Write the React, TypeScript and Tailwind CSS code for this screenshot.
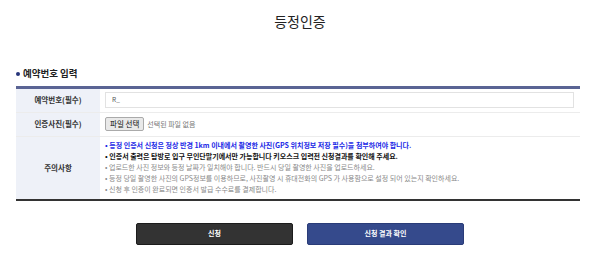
import React from 'react';

const font = { fontFamily: '"Noto Sans CJK KR", "Noto Sans", sans-serif' };

export default function App() {
  const notes = [
    { text: '등정 인증서 신청은 정상 반경 1km 이내에서 촬영한 사진(GPS 위치정보 저장 필수)을 첨부하여야 합니다.', cls: 'text-[#1a28e6] font-bold' },
    { text: '인증서 출력은 탐방로 입구 무인단말기에서만 가능합니다 키오스크 입력전 신청결과를 확인해 주세요.', cls: 'text-[#111] font-bold' },
    { text: '업로드한 사진 정보와 등정 날짜가 일치해야 합니다. 반드시 당일 촬영한 사진을 업로드하세요.', cls: 'text-[#8a8a8a]' },
    { text: '등정 당일 촬영한 사진의 GPS정보를 이용하므로, 사진촬영 시 휴대전화의 GPS 가 사용함으로 설정 되어 있는지 확인하세요.', cls: 'text-[#8a8a8a]' },
    { text: '신청 후 인증이 완료되면 인증서 발급 수수료를 결제합니다.', cls: 'text-[#8a8a8a]' },
  ];

  return (
    <div className="w-[600px] h-[253px] bg-white text-[#222]" style={font}>
      <h1 className="text-center text-[14px] leading-none pt-[14px] text-[#222]">등정인증</h1>

      <div className="ml-[16px] w-[564px] mt-[41px]">
        <div className="flex items-center gap-[3px] text-[9.5px] font-bold leading-none mb-[7px]">
          <span className="w-[4px] h-[4px] rounded-full bg-[#26357a]" />
          <span>예약번호 입력</span>
        </div>

        <div className="border-t-[3px] border-[#5a6494] border-b-2 border-b-[#333]">
          <div className="flex h-[24px] border-b border-[#ececec]">
            <div className="w-[84px] bg-[#eef1f8] flex items-center justify-center text-[7.5px] font-bold text-[#333]">예약번호(필수)</div>
            <div className="flex-1 flex items-center pl-[5px] pr-[6px]">
              <div className="w-full h-[16px] border border-[#e2e2e2] flex items-center pl-[6px] text-[6.5px] text-[#555]">R_</div>
            </div>
          </div>
          <div className="flex h-[24px] border-b border-[#ececec]">
            <div className="w-[84px] bg-[#eef1f8] flex items-center justify-center text-[7.5px] font-bold text-[#333]">인증사진(필수)</div>
            <div className="flex-1 flex items-center pl-[5px] gap-[3px]">
              <span className="h-[14px] px-[4px] flex items-center bg-[#e9e9e9] border border-[#aaa] rounded-[2px] text-[7.5px] text-[#111]">파일 선택</span>
              <span className="text-[7px] text-[#777]">선택된 파일 없음</span>
            </div>
          </div>
          <div className="flex h-[62px]">
            <div className="w-[84px] bg-[#eef1f8] flex items-center justify-center text-[7.5px] font-bold text-[#333]">주의사항</div>
            <div className="flex-1 flex flex-col justify-center pl-[5px] text-[7px] leading-[11px]">
              {notes.map((n, i) => (
                <div key={i} className={n.cls}>• {n.text}</div>
              ))}
            </div>
          </div>
        </div>
      </div>

      <div className="flex justify-center gap-[14px] mt-[22px]">
        <button className="w-[157px] h-[22px] bg-[#333] border border-[#1c1c1c] rounded-[2px] text-white text-[7px] font-bold">신청</button>
        <button className="w-[157px] h-[22px] bg-[#354a8c] border border-[#2a3c78] rounded-[2px] text-white text-[7px] font-bold">신청 결과 확인</button>
      </div>
    </div>
  );
}
